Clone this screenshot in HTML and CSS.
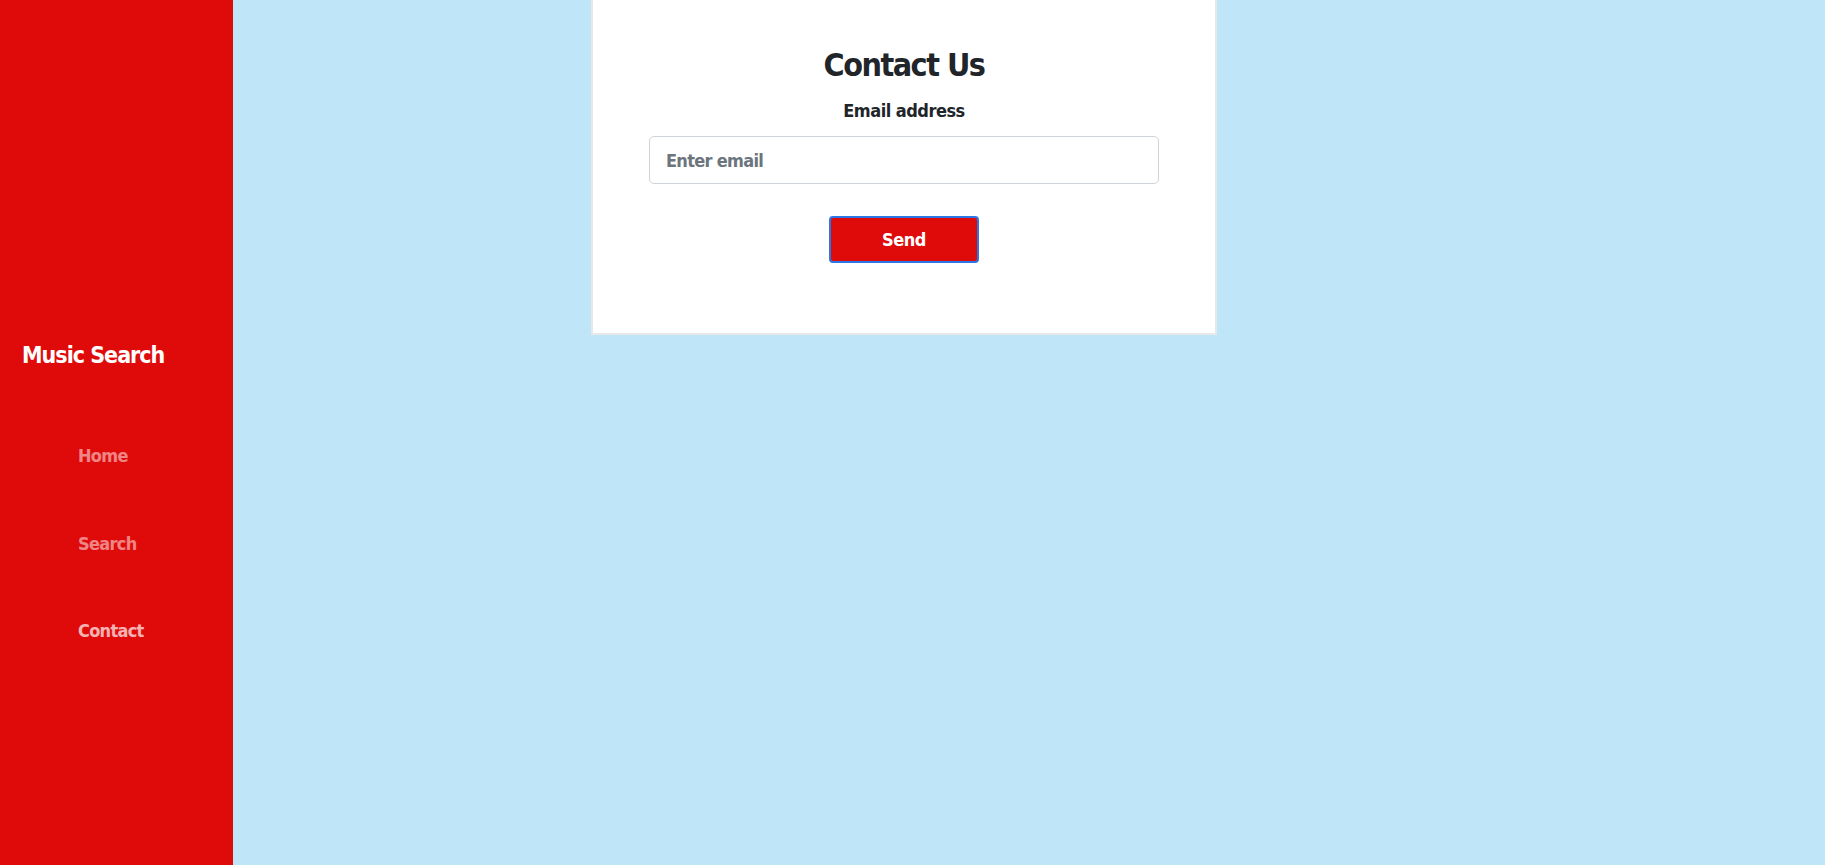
FILE: index.html
```html
<!DOCTYPE html>
<html lang="en">
<head>
<meta charset="utf-8">
<title>Contact Us - Music Search</title>
<link rel="stylesheet" href="styles.css">
</head>
<body>
<div class="layout">
  <aside class="sidebar">
    <div class="brand">Music Search</div>
    <nav class="nav">
      <a class="nav-link" href="#">Home</a>
      <a class="nav-link" href="#">Search</a>
      <a class="nav-link active" href="#">Contact</a>
    </nav>
  </aside>
  <main class="main">
    <section class="card">
      <h1 class="title">Contact Us</h1>
      <form class="form">
        <label class="label" for="email">Email address</label>
        <input class="input" id="email" type="email" placeholder="Enter email">
        <button class="btn" type="button">Send</button>
      </form>
    </section>
  </main>
</div>
</body>
</html>
```

FILE: styles.css
```css
html, body {
  margin: 0;
  padding: 0;
  height: 100%;
}

body {
  font-family: "DejaVu Sans Condensed", "Liberation Sans", sans-serif;
  font-weight: bold;
  background: #bee5f8;
  color: #212529;
}

.layout {
  display: flex;
  min-height: 100vh;
}

.sidebar {
  width: 233px;
  flex: 0 0 233px;
  background: #df0b0b;
  padding-top: 338px;
  box-sizing: border-box;
}

.brand {
  color: #ffffff;
  font-size: 23px;
  line-height: 35px;
  letter-spacing: -1px;
  padding-left: 22px;
}

.nav {
  display: flex;
  flex-direction: column;
  gap: 54.5px;
  margin-top: 66px;
  padding-left: 78px;
}

.nav-link {
  color: rgba(255, 255, 255, 0.5);
  font-size: 18px;
  line-height: 33px;
  letter-spacing: -0.7px;
  text-decoration: none;
}

.nav-link.active {
  color: rgba(255, 255, 255, 0.7);
}

.main {
  flex: 1;
  padding-left: 358px;
}

.card {
  width: 626px;
  box-sizing: border-box;
  background: #ffffff;
  border: 2px solid #e8e8e8;
  border-top: none;
  padding: 41px 0 70px;
  display: flex;
  flex-direction: column;
  align-items: center;
}

.title {
  margin: 0;
  font-size: 32px;
  line-height: 48px;
  letter-spacing: -1.5px;
  font-weight: bold;
  color: #212529;
}

.form {
  display: flex;
  flex-direction: column;
  align-items: center;
  width: 100%;
}

.label {
  margin-top: 9px;
  font-size: 18px;
  line-height: 26px;
  letter-spacing: -0.5px;
  color: #212529;
}

.input {
  margin-top: 12px;
  width: 510px;
  height: 48px;
  box-sizing: border-box;
  border: 1px solid #ced4da;
  border-radius: 5px;
  padding: 0 16px;
  font-family: inherit;
  font-weight: bold;
  font-size: 18px;
  letter-spacing: -0.7px;
  color: #212529;
  background: #ffffff;
  outline: none;
}

.input::placeholder {
  color: #6c757d;
}

.btn {
  margin-top: 32px;
  width: 150px;
  height: 47px;
  box-sizing: border-box;
  background: #df0b0b;
  color: #ffffff;
  border: 2px solid #2a76e6;
  border-radius: 4px;
  font-family: inherit;
  font-weight: bold;
  font-size: 18px;
  letter-spacing: -0.5px;
  padding: 0;
  cursor: pointer;
}
```
